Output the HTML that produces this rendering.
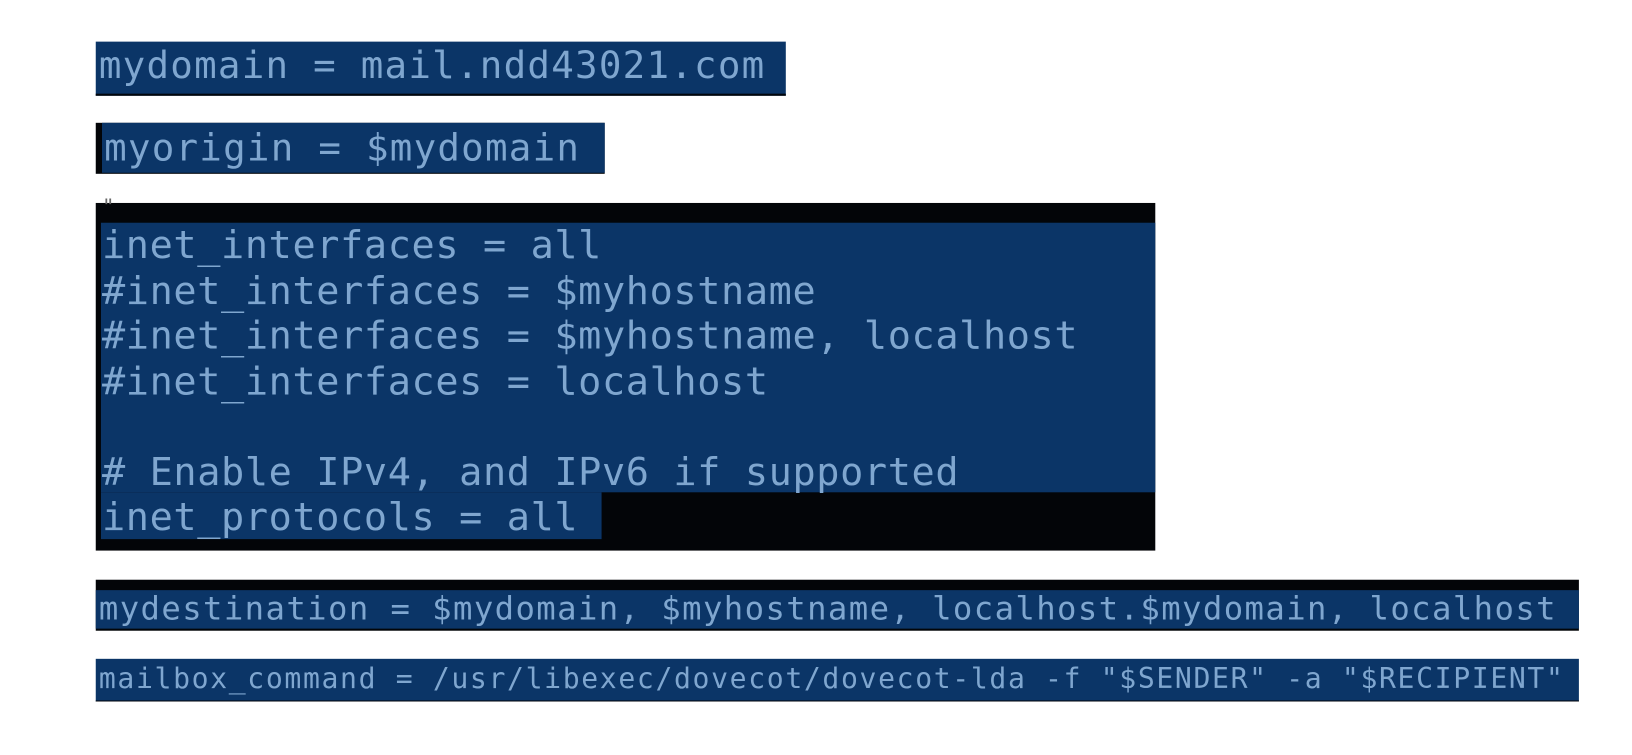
<!DOCTYPE html>
<html><head><meta charset="utf-8"><style>
html,body{margin:0;padding:0;background:#fff;width:1632px;height:755px;overflow:hidden;position:relative}
#w{position:absolute;left:0;top:0;width:1568px;height:726px;transform:scale(1.0408);transform-origin:0 0}
.b{position:absolute;background:#0b3567;}
.k{position:absolute;background:#030508;}
.t{position:absolute;white-space:pre;font-family:"DejaVu Sans Mono","Liberation Mono",monospace;color:#7fa6cf;}
</style></head><body><div id="w">
<div class="b" style="left:92px;top:40px;width:663px;height:50px;border-bottom:2px solid #02060c"></div>
<div class="t" style="left:95px;top:41px;font-size:36px;line-height:46px;letter-spacing:1.2px">mydomain = mail.ndd43021.com</div>

<div class="k" style="left:92px;top:118px;width:489px;height:49px"></div>
<div class="b" style="left:98px;top:118px;width:483px;height:48px"></div>
<div class="t" style="left:100px;top:120px;font-size:36px;line-height:46px;letter-spacing:1.2px">myorigin = $mydomain</div>

<div class="k" style="left:92px;top:195px;width:1018px;height:334px"></div>
<div class="b" style="left:97px;top:214px;width:1013px;height:259px"></div>
<div class="b" style="left:97px;top:473px;width:481px;height:45px"></div>
<div class="t" style="left:98px;top:188px;font-size:20px;line-height:20px;color:#666">"</div>
<div class="t" style="left:98px;top:214px;font-size:37px;line-height:43.5px;letter-spacing:0.6px">inet_interfaces = all
#inet_interfaces = $myhostname
#inet_interfaces = $myhostname, localhost
#inet_interfaces = localhost

# Enable IPv4, and IPv6 if supported
inet_protocols = all</div>

<div class="k" style="left:92px;top:557px;width:1425px;height:49px"></div>
<div class="b" style="left:92px;top:567px;width:1425px;height:37px"></div>
<div class="t" style="left:95px;top:565px;font-size:31px;line-height:40px;letter-spacing:1.35px">mydestination = $mydomain, $myhostname, localhost.$mydomain, localhost</div>

<div class="b" style="left:92px;top:633px;width:1425px;height:40px;border-bottom:1px solid #02060c"></div>
<div class="t" style="left:95px;top:635px;font-size:27px;line-height:36px;letter-spacing:1.57px">mailbox_command = /usr/libexec/dovecot/dovecot-lda -f "$SENDER" -a "$RECIPIENT"</div>
</div></body></html>
